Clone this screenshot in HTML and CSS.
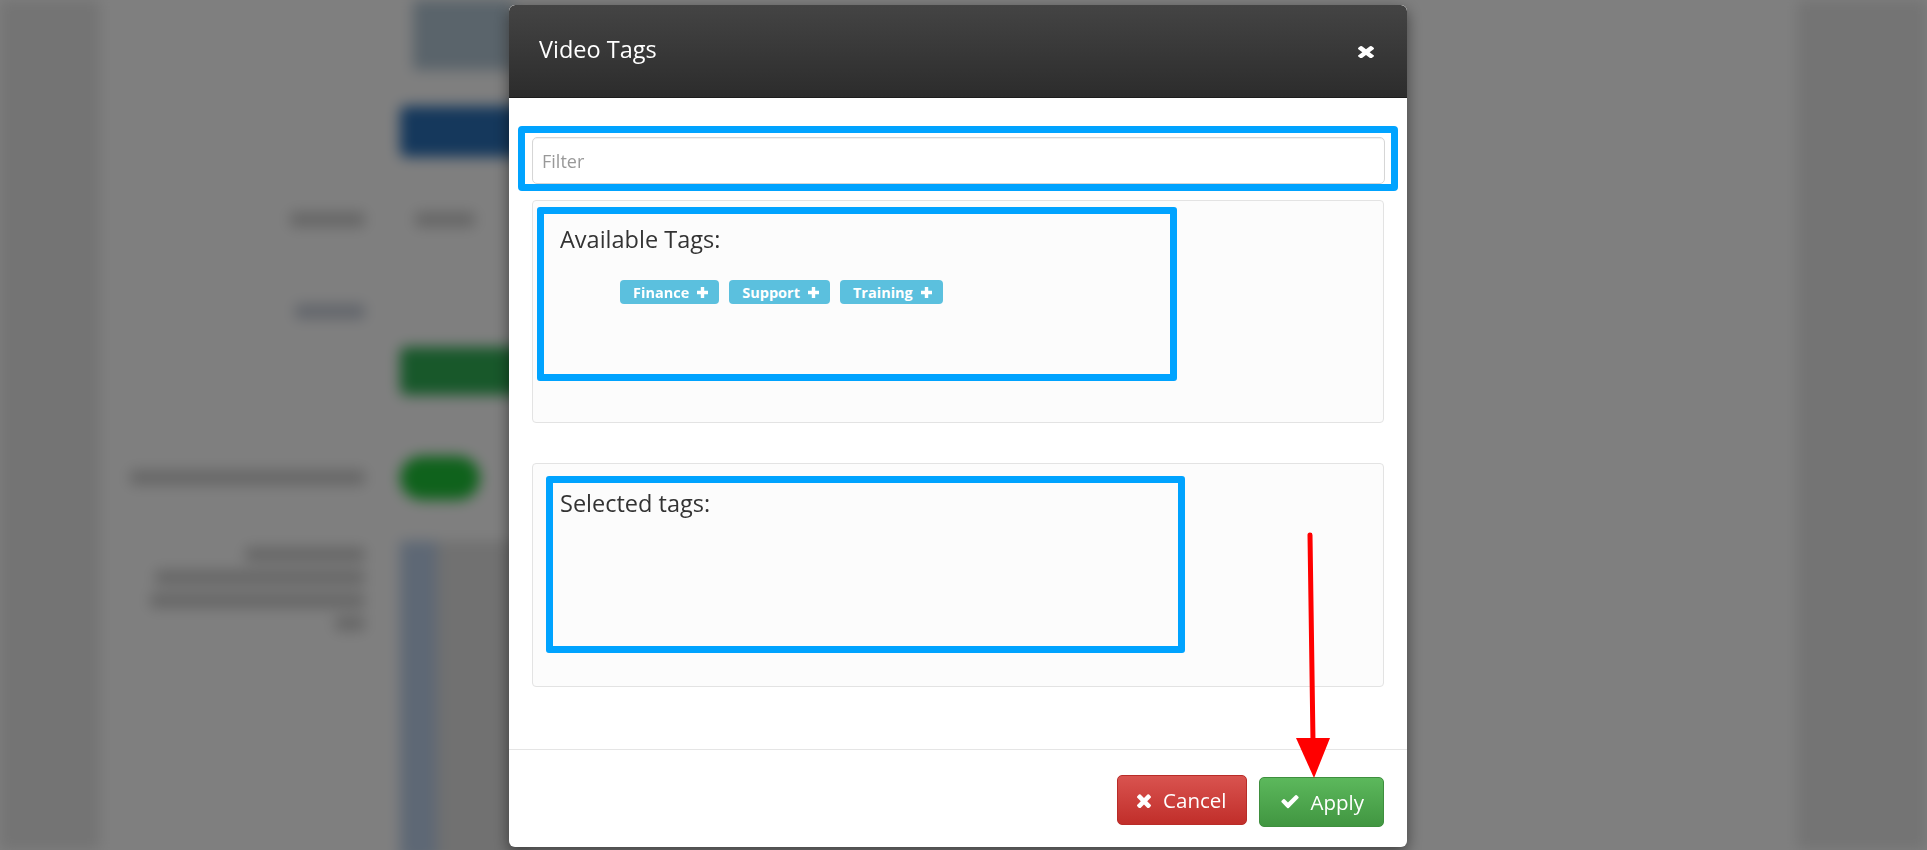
FILE: index.html
```html
<!DOCTYPE html>
<html lang="en">
<head>
  <meta charset="UTF-8" />
  <title>Video Tags</title>
  <link rel="stylesheet" href="styles.css">
</head>
<body>

  <!-- page behind the modal -->
  <div class="page">
    <div class="side"></div>
    <div class="page-main">
      <div class="bg-row row-thumb">
        <div class="bg-label"></div>
        <div class="bg-thumb"></div>
      </div>
      <div class="bg-row row-btn">
        <div class="bg-label"></div>
        <div class="bg-btn blue"></div>
      </div>
      <div class="bg-row row-text">
        <div class="bg-label"><span class="bg-line w75"></span></div>
        <span class="bg-line w60 offset"></span>
      </div>
      <div class="bg-row row-text2">
        <div class="bg-label"><span class="bg-line w70 bluish"></span></div>
      </div>
      <div class="bg-row row-btn2">
        <div class="bg-label"></div>
        <div class="bg-btn green"></div>
      </div>
      <div class="bg-row row-toggle">
        <div class="bg-label"><span class="bg-line w235"></span></div>
        <div class="bg-toggle"></div>
      </div>
      <div class="bg-row row-list">
        <div class="bg-label stack">
          <span class="bg-line w120"></span>
          <span class="bg-line w210"></span>
          <span class="bg-line w215"></span>
          <span class="bg-line w30"></span>
        </div>
        <div class="bg-strip"></div>
        <div class="bg-grid"></div>
      </div>
    </div>
    <div class="side right"></div>
  </div>

  <div class="backdrop"></div>

  <div class="modal">
    <div class="modal-dialog">
      <div class="modal-header">
        <h4 class="modal-title">Video Tags</h4>
        <button class="close" type="button" aria-label="Close">
          <svg width="16" height="13" viewBox="110 266 1188 1260" preserveAspectRatio="none"><path fill="#fff" d="M1298 1322q0 40-28 68l-136 136q-28 28-68 28t-68-28l-294-294-294 294q-28 28-68 28t-68-28l-136-136q-28-28-28-68t28-68l294-294-294-294q-28-28-28-68t28-68l136-136q28-28 68-28t68 28l294 294 294-294q28-28 68-28t68 28l136 136q28 28 28 68t-28 68l-294 294 294 294q28 28 28 68z"/></svg>
        </button>
      </div>

      <div class="modal-body">
        <div class="filter-wrap">
          <input type="text" class="filter-input" placeholder="Filter">
        </div>

        <div class="panel">
          <div class="mark mark-available">
            <h4 class="panel-title">Available Tags:</h4>
            <div class="tag-list">
              <span class="tag">Finance <svg class="plus" width="11" height="11" viewBox="0 0 11 11"><path fill="#fff" d="M3.8 0h3.4v3.8H11v3.4H7.2V11H3.8V7.2H0V3.8h3.8z"/></svg></span>
              <span class="tag">Support <svg class="plus" width="11" height="11" viewBox="0 0 11 11"><path fill="#fff" d="M3.8 0h3.4v3.8H11v3.4H7.2V11H3.8V7.2H0V3.8h3.8z"/></svg></span>
              <span class="tag">Training <svg class="plus" width="11" height="11" viewBox="0 0 11 11"><path fill="#fff" d="M3.8 0h3.4v3.8H11v3.4H7.2V11H3.8V7.2H0V3.8h3.8z"/></svg></span>
            </div>
          </div>
        </div>

        <div class="panel panel-selected">
          <div class="mark mark-selected">
            <h4 class="panel-title">Selected tags:</h4>
          </div>
        </div>
      </div>

      <div class="modal-footer">
        <button class="btn btn-cancel" type="button">
          <svg width="14" height="15" viewBox="110 266 1188 1260"><path fill="#fff" d="M1298 1322q0 40-28 68l-136 136q-28 28-68 28t-68-28l-294-294-294 294q-28 28-68 28t-68-28l-136-136q-28-28-28-68t28-68l294-294-294-294q-28-28-28-68t28-68l136-136q28-28 68-28t68 28l294 294 294-294q28-28 68-28t68 28l136 136q28 28 28 68t-28 68l-294 294 294 294q28 28 28 68z"/></svg>
          Cancel
        </button>
        <button class="btn btn-apply" type="button">
          <svg width="20" height="16" viewBox="0 390 1792 1150"><path fill="#fff" d="M1671 566q0 40-28 68l-724 724-136 136q-28 28-68 28t-68-28l-136-136-362-362q-28-28-28-68t28-68l136-136q28-28 68-28t68 28l294 295 656-657q28-28 68-28t68 28l136 136q28 28 28 68z"/></svg>
          Apply
        </button>
      </div>
    </div>
  </div>

  <!-- annotation arrow -->
  <svg class="arrow" width="50" height="255" viewBox="0 0 50 255">
    <line x1="20" y1="5" x2="23" y2="212" stroke="#ff0000" stroke-width="5" stroke-linecap="round"/>
    <polygon points="6,208 40,208 24,248" fill="#ff0000"/>
  </svg>

</body>
</html>
```

FILE: styles.css
```css
body {
  margin: 0;
  height: 850px;
  overflow: hidden;
  background: #fff;
  font-family: "Open Sans", Arial, sans-serif;
}

/* ---- page behind ---- */
.page {
  display: flex;
  height: 850px;
  filter: blur(7px);
}

.side {
  width: 100px;
  background: #e8e8e8;
}

.side.right {
  width: 130px;
}

.page-main {
  flex: 1;
  background: #fff;
}

.bg-row {
  display: flex;
  gap: 35px;
  align-items: center;
}

.bg-label {
  width: 265px;
  display: flex;
  justify-content: flex-end;
  align-items: center;
}

.bg-label.stack {
  flex-direction: column;
  align-items: flex-end;
  gap: 8px;
  align-self: flex-start;
  padding-top: 6px;
}

.bg-line {
  display: block;
  height: 15px;
  background: #cdcdcd;
  border-radius: 4px;
}

.bg-line.bluish { background: #c6ccd8; }
.bg-line.offset { margin-left: 15px; }
.w30 { width: 30px; }
.w60 { width: 60px; }
.w70 { width: 70px; }
.w75 { width: 75px; }
.w120 { width: 120px; }
.w210 { width: 210px; }
.w215 { width: 215px; }
.w235 { width: 235px; }

.row-thumb { height: 70px; }
.row-btn { height: 51px; margin-top: 36px; }
.row-text { height: 15px; margin-top: 55px; }
.row-text2 { height: 15px; margin-top: 77px; }
.row-btn2 { height: 48px; margin-top: 28px; }
.row-toggle { height: 51px; margin-top: 57px; }
.row-list { height: 320px; margin-top: 38px; align-items: stretch; gap: 0; }

.bg-thumb {
  width: 100px;
  height: 70px;
  margin-left: 13px;
  background: #b4c8d6;
}

.bg-btn {
  width: 125px;
  height: 100%;
  border-radius: 6px;
}

.bg-btn.blue { background: #2a70b8; }
.bg-btn.green { background: #30b055; }

.bg-toggle {
  width: 80px;
  height: 44px;
  border-radius: 22px;
  background: #1fc438;
}

.bg-strip {
  width: 37px;
  margin-left: 35px;
  background: #bcd0ea;
}

.bg-grid {
  width: 90px;
  background: #e2e2e2;
}

.backdrop {
  position: fixed;
  inset: 0;
  background: rgba(0, 0, 0, 0.5);
}

/* ---- modal ---- */
.modal {
  position: fixed;
  inset: 0;
}

.modal-dialog {
  width: 898px;
  height: 842px;
  margin: 5px 0 0 509px;
  background: #fff;
  border-radius: 6px;
  box-shadow: 0 5px 15px rgba(0, 0, 0, 0.5);
  display: flex;
  flex-direction: column;
  overflow: hidden;
}

.modal-header {
  height: 93px;
  box-sizing: border-box;
  flex-shrink: 0;
  display: flex;
  align-items: center;
  justify-content: space-between;
  padding: 0 33px 0 30px;
  background: linear-gradient(#444444, #2c2c2c);
  border-bottom: 1px solid #1c1c1c;
  border-radius: 6px 6px 0 0;
}

.modal-title {
  margin: 0 0 4px;
  font-size: 23.5px;
  font-weight: normal;
  color: #fff;
}

.close {
  border: none;
  background: none;
  padding: 0;
  display: flex;
  cursor: pointer;
}

.modal-body {
  padding: 28px 9px 62px;
  flex-shrink: 0;
}

.filter-wrap {
  border: 7px solid #00a3ff;
  border-radius: 4px;
  padding: 4px 6px 0 7px;
}

.filter-input {
  display: block;
  width: 100%;
  height: 47px;
  box-sizing: border-box;
  padding: 0 9px;
  border: 1px solid #d6d6d6;
  border-radius: 5px;
  box-shadow: inset 0 1px 1px rgba(0, 0, 0, 0.06);
  font-family: "Open Sans", Arial, sans-serif;
  font-size: 18px;
  color: #555;
}

.filter-input::placeholder {
  color: #999;
}

.panel {
  margin: 9px 14px 0;
  height: 223px;
  box-sizing: border-box;
  background: #fcfcfc;
  border: 1px solid #e3e3e3;
  border-radius: 4px;
  overflow: hidden;
}

.panel-selected {
  margin-top: 40px;
  height: 224px;
}

.mark {
  box-sizing: border-box;
  border: 7px solid #00a3ff;
  border-radius: 3px;
}

.mark-available {
  width: 640px;
  height: 174px;
  margin: 6px 0 0 4px;
  padding: 9px 0 0 16px;
}

.mark-selected {
  width: 639px;
  height: 177px;
  margin: 12px 0 0 13px;
  padding: 4px 0 0 7px;
}

.panel-title {
  margin: 0;
  font-size: 23.5px;
  font-weight: normal;
  color: #333;
}

.tag-list {
  display: flex;
  gap: 10px;
  margin: 25px 0 0 60px;
}

.tag {
  display: inline-flex;
  align-items: center;
  gap: 8px;
  height: 24px;
  padding: 0 11px 0 13px;
  background: #5bc0de;
  border-radius: 4px;
  color: #fff;
  font-size: 14.5px;
  font-weight: bold;
}

.modal-footer {
  flex: 1;
  border-top: 1px solid #e5e5e5;
  display: flex;
  justify-content: flex-end;
  align-items: flex-start;
  gap: 12px;
  padding: 25px 23px 0 0;
}

.btn {
  display: inline-flex;
  align-items: center;
  height: 50px;
  border-radius: 5px;
  border: 1px solid;
  color: #fff;
  font-family: "Open Sans", Arial, sans-serif;
  font-size: 20.5px;
  cursor: pointer;
}

.btn-cancel {
  gap: 12px;
  padding: 0 19px 0 19px;
  background: linear-gradient(#d9534f, #c12e2a);
  border-color: #b92c28;
}

.btn-apply {
  gap: 11px;
  padding: 0 19px 0 20px;
  margin-top: 2px;
  background: linear-gradient(#5cb85c, #419641);
  border-color: #3e8f3e;
}

.arrow {
  position: absolute;
  left: 1290px;
  top: 530px;
}
```
